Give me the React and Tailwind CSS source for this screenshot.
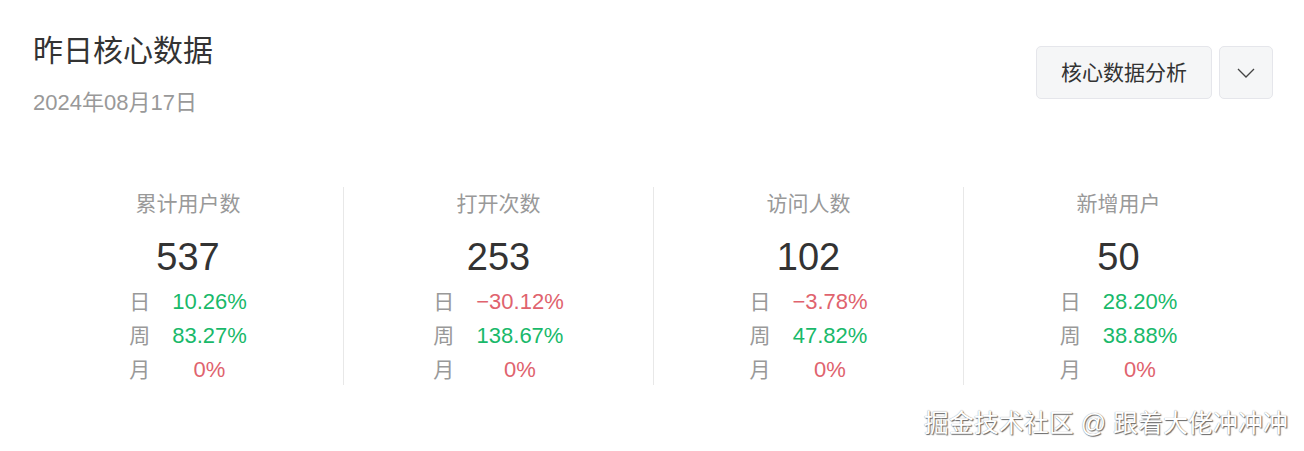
import React from 'react';

const stats = [
  { label: '累计用户数', value: 537, day: '10.26%', week: '83.27%', month: '0%' },
  { label: '打开次数', value: 253, day: '−30.12%', week: '138.67%', month: '0%' },
  { label: '访问人数', value: 102, day: '−3.78%', week: '47.82%', month: '0%' },
  { label: '新增用户', value: 50, day: '28.20%', week: '38.88%', month: '0%' },
];

const tone = (v) => (v.startsWith('−') || v === '0%' ? 'text-[#e0636e]' : 'text-[#19b96a]');

const StatColumn = ({ item, first }) => (
  <div className={`flex flex-col items-center h-[198px] ${first ? '' : 'border-l border-[#e8e8e8]'}`}>
    <div className="text-[21px] leading-[34px] text-[#999]">{item.label}</div>
    <div className="mt-[12px] text-[38px] leading-[48px] text-[#333]">{item.value}</div>
    <div className="mt-[4px] grid grid-cols-[auto_auto] gap-x-[22px] leading-[34px]">
      {[
        ['日', item.day],
        ['周', item.week],
        ['月', item.month],
      ].map(([k, v]) => (
        <React.Fragment key={k}>
          <span className="text-[21px] text-[#999]">{k}</span>
          <span className={`text-center text-[22px] ${tone(v)}`}>{v}</span>
        </React.Fragment>
      ))}
    </div>
  </div>
);

export default function App() {
  return (
    <div
      className="relative h-[451px] bg-white pl-[33px] pr-[31px] pt-[31px]"
      style={{ fontFamily: '"Liberation Sans", "Noto Sans CJK SC", sans-serif' }}
    >
      <div className="flex items-start justify-between">
        <div>
          <h1 className="text-[30px] leading-[40px] text-[#333]">昨日核心数据</h1>
          <p className="mt-[18px] text-[22px] leading-[28px] text-[#999]">2024年08月17日</p>
        </div>
        <div className="mt-[15px] flex gap-[7px]">
          <button className="h-[53px] w-[176px] rounded-[5px] border border-[#e5e6eb] bg-[#f5f6f7] text-[21px] text-[#333]">
            核心数据分析
          </button>
          <button className="flex h-[53px] w-[54px] items-center justify-center rounded-[5px] border border-[#e5e6eb] bg-[#f5f6f7]">
            <svg width="18" height="10" viewBox="0 0 18 10" fill="none">
              <path d="M1 1l8 8 8-8" stroke="#444" strokeWidth="1.3" />
            </svg>
          </button>
        </div>
      </div>

      <div className="mt-[70px] grid grid-cols-4">
        {stats.map((s, i) => (
          <StatColumn key={s.label} item={s} first={i === 0} />
        ))}
      </div>

      <div
        className="absolute right-[16px] top-[405px] text-[25px] leading-[36px] text-white"
        style={{ textShadow: '1px 1px 1px #666, 0 0 1px #888' }}
      >
        掘金技术社区 @ 跟着大佬冲冲冲
      </div>
    </div>
  );
}
